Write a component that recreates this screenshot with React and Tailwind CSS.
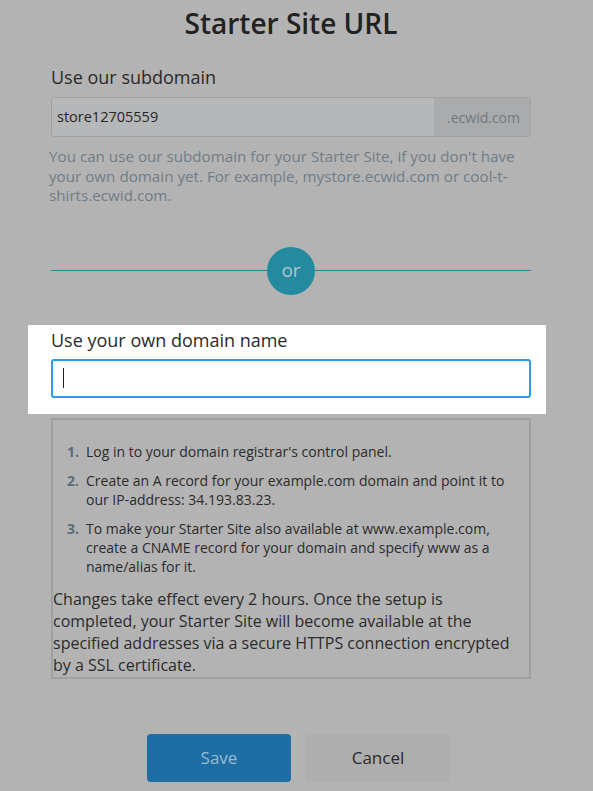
export default function App() {
  const steps = [
    "Log in to your domain registrar's control panel.",
    "Create an A record for your example.com domain and point it to our IP-address: 34.193.83.23.",
    "To make your Starter Site also available at www.example.com, create a CNAME record for your domain and specify www as a name/alias for it.",
  ]

  return (
    <div className="min-h-[791px] bg-[#b3b3b3] font-['Open_Sans',sans-serif] text-[#262626]">
      <div className="w-[480px] ml-[51px] pt-[5px]">
        <h1 className="text-center text-[28px] leading-[36px] font-semibold text-[#222]">Starter Site URL</h1>

        <p className="mt-[24px] text-[18px] leading-[24px] text-[#2a2a2a]">Use our subdomain</p>
        <div className="mt-[8px] flex h-[40px] border border-[#a0a1a3] rounded-[3px] overflow-hidden">
          <div className="flex-1 flex items-center bg-[#b6b7b9] pl-[5px] text-[14.5px] text-[#262626]">store12705559</div>
          <div className="w-[96px] flex items-center justify-end pr-[10px] bg-[#aaabad] text-[14px] text-[#6f7a84]">.ecwid.com</div>
        </div>
        <p className="mt-[10px] -ml-[2px] text-[15.2px] leading-[19.5px] text-[#707d88]">
          You can use our subdomain for your Starter Site, if you don't have your own domain yet. For example, mystore.ecwid.com or cool-t-shirts.ecwid.com.
        </p>

        <div className="mt-[41px] flex items-center">
          <div className="flex-1 h-px bg-[#2387a0]" />
          <div className="w-[48px] h-[48px] rounded-full bg-[#248a9f] flex items-center justify-center text-[19px] text-[#b0c6cb]">or</div>
          <div className="flex-1 h-px bg-[#2387a0]" />
        </div>
      </div>

      <div className="mt-[30px] ml-[28px] w-[518px] h-[89px] bg-white pl-[23px] pr-[15px] pt-[2px]">
        <p className="text-[18px] leading-[26px] text-[#2a2a2a]">Use your own domain name</p>
        <div className="mt-[6px] h-[39px] border-2 border-[#2b9de8] rounded-[3px] flex items-center pl-[10px]">
          <div className="w-px h-[20px] bg-[#222]" />
        </div>
      </div>

      <div className="mt-[4px] ml-[51px] w-[480px] border-2 border-[#a0a0a0] pt-[22px]">
        <ol className="pl-[14px] pr-[20px] text-[14px] leading-[19px] text-[#2b2b2b]">
          {steps.map((s, i) => (
            <li key={i} className="flex mb-[10px]">
              <span className="w-[19px] shrink-0 font-bold text-[#5e6c78]">{i + 1}.</span>
              <span>{s}</span>
            </li>
          ))}
        </ol>
        <p className="mt-[12px] pb-[1px] text-[16px] leading-[22px] text-[#2b2b2b]">
          Changes take effect every 2 hours. Once the setup is completed, your Starter Site will become available at the specified addresses via a secure HTTPS connection encrypted by a SSL certificate.
        </p>
      </div>

      <div className="mt-[55px] ml-[147px] flex gap-[15px]">
        <button className="w-[144px] h-[48px] rounded-[4px] bg-[#1d6ea4] text-[17px] text-[#9bbad0]">Save</button>
        <button className="w-[144px] h-[48px] rounded-[4px] bg-[#aeaeae] text-[17px] text-[#2a2a2a]">Cancel</button>
      </div>
    </div>
  )
}
